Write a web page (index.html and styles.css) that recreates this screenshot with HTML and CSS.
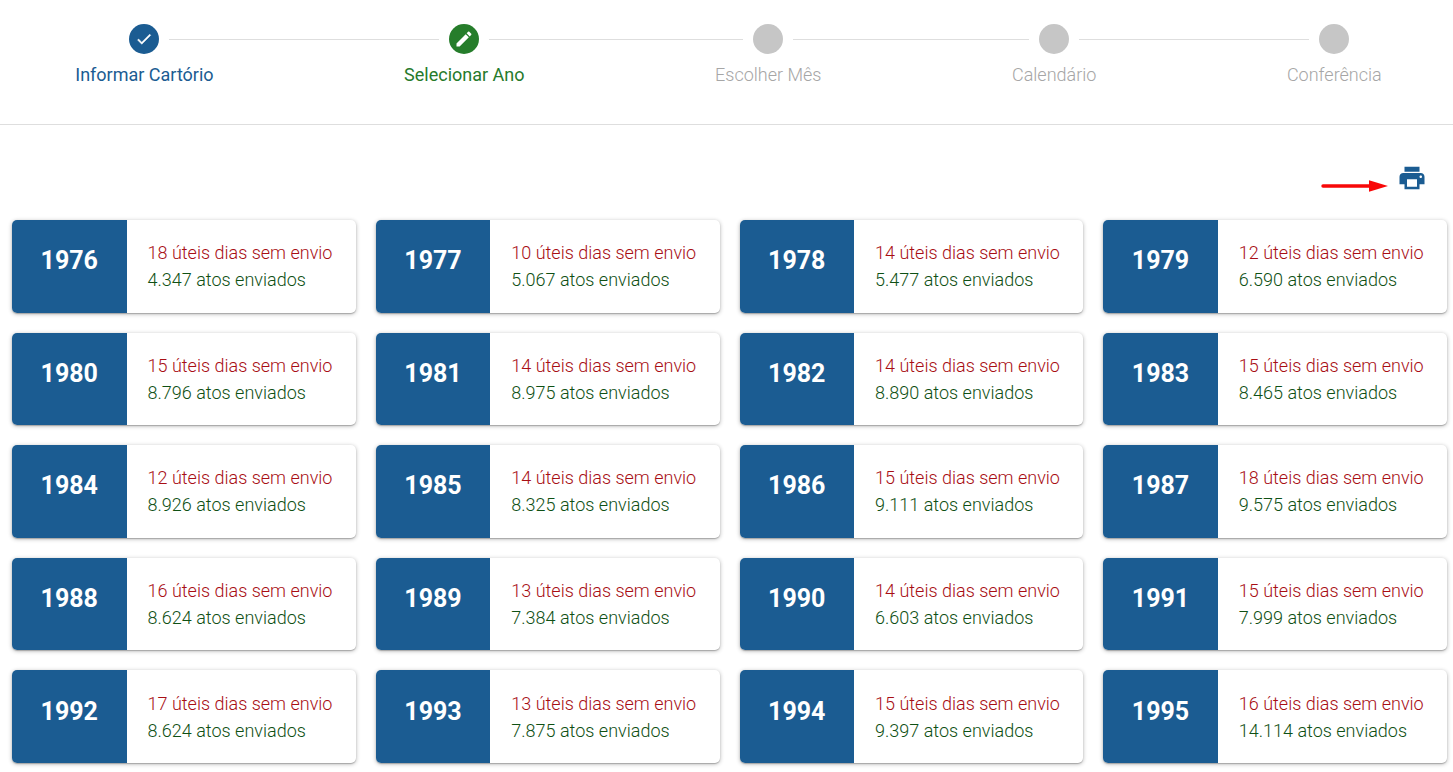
FILE: index.html
```html
<!DOCTYPE html>
<html lang="pt-BR">
<head>
<meta charset="utf-8">
<meta name="viewport" content="width=device-width, initial-scale=1">
<title>Selecionar Ano</title>
<link rel="stylesheet" href="styles.css">
</head>
<body>
<header class="stepper">
  <ol class="steps">
    <li class="step step-done"><button class="step-button" type="button"><span class="step-track"><span class="dot"><svg class="dot-icon" viewBox="0 0 24 24" aria-hidden="true"><path d="M9 16.2L4.8 12l-1.4 1.4L9 19 21 7l-1.4-1.4L9 16.2z" stroke="#fff" stroke-width=".6"/></svg></span></span><span class="step-label">Informar Cartório</span></button></li>
    <li class="step step-active"><button class="step-button" type="button" aria-current="step"><span class="step-track"><span class="dot"><svg class="dot-icon dot-icon-edit" viewBox="0 0 24 24" aria-hidden="true"><path d="M3 17.25V21h3.75L17.81 9.94l-3.75-3.75L3 17.25zM20.71 7.04c.39-.39.39-1.02 0-1.41l-2.34-2.34c-.39-.39-1.02-.39-1.41 0l-1.83 1.83 3.75 3.75 1.83-1.83z"/></svg></span></span><span class="step-label">Selecionar Ano</span></button></li>
    <li class="step"><button class="step-button" type="button"><span class="step-track"><span class="dot"></span></span><span class="step-label">Escolher Mês</span></button></li>
    <li class="step"><button class="step-button" type="button"><span class="step-track"><span class="dot"></span></span><span class="step-label">Calendário</span></button></li>
    <li class="step"><button class="step-button" type="button"><span class="step-track"><span class="dot"></span></span><span class="step-label">Conferência</span></button></li>
  </ol>
</header>
<main class="content">
  <div class="toolbar">
    <svg class="arrow" viewBox="0 0 68 14" aria-hidden="true"><path d="M2 7H50" stroke="#f80808" stroke-width="3.4" stroke-linecap="round"/><path d="M48 1.2L67 7L48 12.8Z" fill="#f80808"/></svg>
    <button class="print" type="button" aria-label="Imprimir"><svg class="print-icon" viewBox="0 0 24 24" aria-hidden="true"><path d="M19 8H5c-1.660 0-3 1.340-3 3v6h4v4h12v-4h4v-6c0-1.660-1.340-3-3-3zm-3 11H8v-6h8v6zm3-7c-.550 0-1-.450-1-1s.450-1 1-1 1 .450 1 1-.450 1-1 1zm-1-9H6v4h12V3z"/></svg></button>
  </div>
  <div class="years">
    <button class="card" type="button"><span class="year">1976</span><span class="info"><span class="missing">18 úteis dias sem envio</span><span class="sent">4.347 atos enviados</span></span></button>
    <button class="card" type="button"><span class="year">1977</span><span class="info"><span class="missing">10 úteis dias sem envio</span><span class="sent">5.067 atos enviados</span></span></button>
    <button class="card" type="button"><span class="year">1978</span><span class="info"><span class="missing">14 úteis dias sem envio</span><span class="sent">5.477 atos enviados</span></span></button>
    <button class="card" type="button"><span class="year">1979</span><span class="info"><span class="missing">12 úteis dias sem envio</span><span class="sent">6.590 atos enviados</span></span></button>
    <button class="card" type="button"><span class="year">1980</span><span class="info"><span class="missing">15 úteis dias sem envio</span><span class="sent">8.796 atos enviados</span></span></button>
    <button class="card" type="button"><span class="year">1981</span><span class="info"><span class="missing">14 úteis dias sem envio</span><span class="sent">8.975 atos enviados</span></span></button>
    <button class="card" type="button"><span class="year">1982</span><span class="info"><span class="missing">14 úteis dias sem envio</span><span class="sent">8.890 atos enviados</span></span></button>
    <button class="card" type="button"><span class="year">1983</span><span class="info"><span class="missing">15 úteis dias sem envio</span><span class="sent">8.465 atos enviados</span></span></button>
    <button class="card" type="button"><span class="year">1984</span><span class="info"><span class="missing">12 úteis dias sem envio</span><span class="sent">8.926 atos enviados</span></span></button>
    <button class="card" type="button"><span class="year">1985</span><span class="info"><span class="missing">14 úteis dias sem envio</span><span class="sent">8.325 atos enviados</span></span></button>
    <button class="card" type="button"><span class="year">1986</span><span class="info"><span class="missing">15 úteis dias sem envio</span><span class="sent">9.111 atos enviados</span></span></button>
    <button class="card" type="button"><span class="year">1987</span><span class="info"><span class="missing">18 úteis dias sem envio</span><span class="sent">9.575 atos enviados</span></span></button>
    <button class="card" type="button"><span class="year">1988</span><span class="info"><span class="missing">16 úteis dias sem envio</span><span class="sent">8.624 atos enviados</span></span></button>
    <button class="card" type="button"><span class="year">1989</span><span class="info"><span class="missing">13 úteis dias sem envio</span><span class="sent">7.384 atos enviados</span></span></button>
    <button class="card" type="button"><span class="year">1990</span><span class="info"><span class="missing">14 úteis dias sem envio</span><span class="sent">6.603 atos enviados</span></span></button>
    <button class="card" type="button"><span class="year">1991</span><span class="info"><span class="missing">15 úteis dias sem envio</span><span class="sent">7.999 atos enviados</span></span></button>
    <button class="card" type="button"><span class="year">1992</span><span class="info"><span class="missing">17 úteis dias sem envio</span><span class="sent">8.624 atos enviados</span></span></button>
    <button class="card" type="button"><span class="year">1993</span><span class="info"><span class="missing">13 úteis dias sem envio</span><span class="sent">7.875 atos enviados</span></span></button>
    <button class="card" type="button"><span class="year">1994</span><span class="info"><span class="missing">15 úteis dias sem envio</span><span class="sent">9.397 atos enviados</span></span></button>
    <button class="card" type="button"><span class="year">1995</span><span class="info"><span class="missing">16 úteis dias sem envio</span><span class="sent">14.114 atos enviados</span></span></button>
  </div>
</main>
</body>
</html>
```
FILE: styles.css
```css
* {
  box-sizing: border-box;
}

body {
  display: flex;
  flex-direction: column;
  min-height: 100vh;
  margin: 0;
  background: #fff;
  font-family: Roboto, "Liberation Sans", sans-serif;
  font-size: 18px;
  line-height: 26px;
}

button {
  margin: 0;
  padding: 0;
  border: 0;
  background: none;
  color: inherit;
  font: inherit;
  cursor: pointer;
}

.stepper {
  overflow: hidden;
  padding: 24px 0 36px;
  border-bottom: 1px solid #dedede;
}

.steps {
  display: flex;
  margin: 0 -24px 0 -20px;
  padding: 0;
  list-style: none;
}

.step {
  flex: 1 1 auto;
  color: #a6a6a6;
  font-weight: 300;
}

.step-button {
  display: block;
  width: 100%;
}

.step-track {
  display: flex;
  align-items: center;
  gap: 10px;
}

.step-track::before,
.step-track::after {
  content: "";
  flex: 1;
  height: 1px;
  background: #dedede;
}

.step:first-child .step-track::before,
.step:last-child .step-track::after {
  visibility: hidden;
}

.dot {
  display: flex;
  align-items: center;
  justify-content: center;
  width: 30px;
  height: 30px;
  border-radius: 50%;
  background: #c6c6c6;
}

.dot-icon {
  width: 18px;
  height: 18px;
  fill: #fff;
}

.dot-icon-edit {
  width: 20px;
  height: 20px;
}

.step-label {
  display: block;
  margin-top: 8px;
}

.step-done,
.step-active {
  font-weight: 400;
}

.step-done {
  color: #1b5c92;
}

.step-done .dot {
  background: #1b5c92;
}

.step-active {
  color: #267a2b;
}

.step-active .dot {
  background: #267d2b;
}

.content {
  display: flex;
  flex: 1;
  flex-direction: column;
  padding: 38px 6px 9px 12px;
}

.toolbar {
  display: flex;
  align-items: center;
  justify-content: flex-end;
  gap: 8px;
  margin-bottom: 27px;
  padding-right: 20px;
}

.arrow {
  width: 68px;
  height: 14px;
  margin-top: 16px;
}

.print {
  display: flex;
}

.print-icon {
  width: 30px;
  height: 30px;
  fill: #1b5c92;
}

.years {
  display: grid;
  flex: 1;
  grid-template-columns: repeat(4, 1fr);
  grid-auto-rows: 1fr;
  gap: 20px;
}

.card {
  display: grid;
  grid-template-columns: 1fr 2fr;
  overflow: hidden;
  border-radius: 5px;
  background: #fff;
  box-shadow: 0 1px 4px rgba(0, 0, 0, 0.3), 0 1px 1px rgba(0, 0, 0, 0.2);
  text-align: left;
}

.year {
  display: flex;
  align-items: center;
  justify-content: center;
  padding-bottom: 10px;
  background: #1b5c92;
  color: #fff;
  font-size: 25px;
  font-weight: 700;
}

.info {
  display: flex;
  flex-direction: column;
  justify-content: center;
  padding-left: 21px;
  font-weight: 300;
  line-height: 27px;
  white-space: nowrap;
}

.missing {
  color: #a80e14;
}

.sent {
  color: #0f5014;
}
```
